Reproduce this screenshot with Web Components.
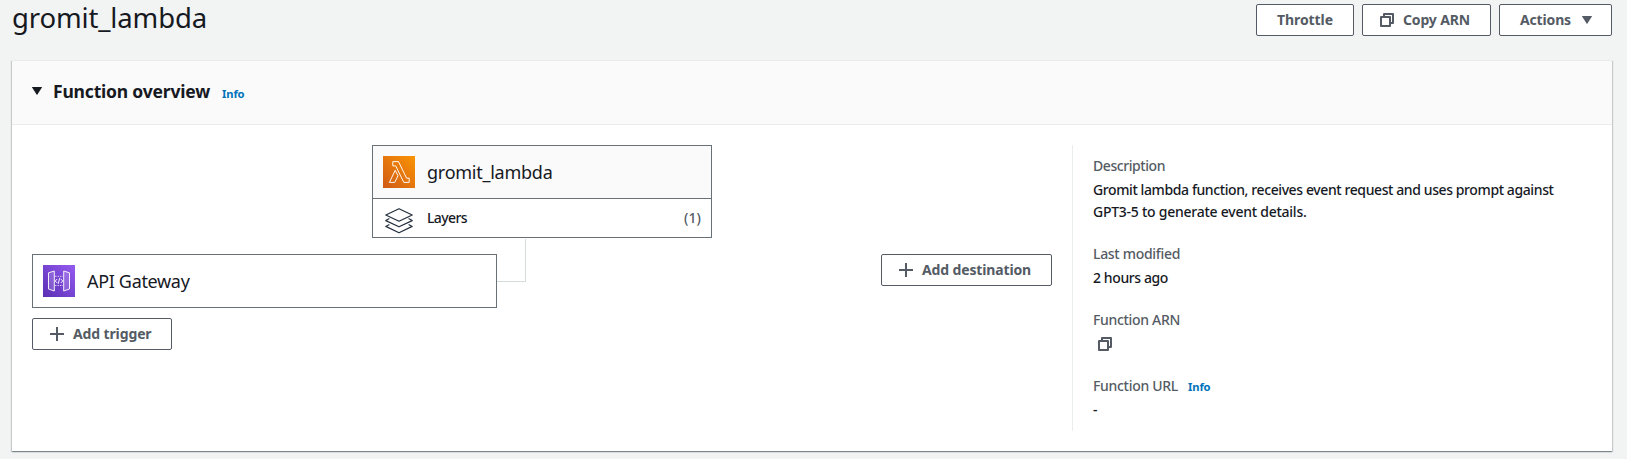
<!DOCTYPE html>
<html lang="en">
<head>
<meta charset="utf-8">
<title>gromit_lambda</title>
<style>
html,body{margin:0;height:100%;background:#f2f3f3;overflow:hidden}
body{font:500 14px/22px "Noto Sans","Open Sans",sans-serif;color:#16191f}
</style>
</head>
<body>
<lambda-page></lambda-page>
<script>
const define = (name, html, ready) => {
  const t = document.createElement('template');
  t.innerHTML = html;
  customElements.define(name, class extends HTMLElement {
    connectedCallback() {
      if (this.shadowRoot) return;
      this.attachShadow({mode: 'open'}).append(t.content.cloneNode(true));
      if (ready) ready(this);
    }
  });
};

// One line of text, tracked so that it spans the given measure.
define('ui-text', `<style>:host{display:block;white-space:nowrap;flex:none}span{display:inline-block}</style><span><slot></slot></span>`, el => {
  const w = +el.getAttribute('measure');
  if (!w) return;
  const span = el.shadowRoot.querySelector('span');
  const n = el.textContent.length;
  span.style.letterSpacing = ((w - span.getBoundingClientRect().width) / n) + 'px';
  el.style.width = w + 'px';
});

define('ui-icon', `<style>:host{display:block;flex:none}svg{display:block}</style><div></div>`, el => {
  const art = {
    copy: `<svg width="14" height="14" viewBox="0 0 14 14" fill="none" stroke="#545b64" stroke-width="2" stroke-linejoin="round"><path d="M1 4h9v9H1zM4 4V1h9v9h-3"/></svg>`,
    plus: `<svg width="14" height="14" viewBox="0 0 14 14" stroke="#545b64" stroke-width="2"><path d="M7 0v14M0 7h14"/></svg>`,
    caret: `<svg width="10" height="8" viewBox="0 0 10 8" fill="currentColor"><path d="M.4 0h9.2q.5 0 .3.5L5.4 7.6q-.4.6-.8 0L.1.5Q-.1 0 .4 0z"/></svg>`,
    layers: `<svg width="28" height="26" viewBox="0 0 28 26" fill="none" stroke="#232f3e" stroke-width="1.2" stroke-linejoin="round"><path d="M14 .8 27.2 7 14 13.2.8 7z"/><path d="M4.4 10.6.8 12.6 14 18.8l13.2-6.2-3.6-2M4.4 16.4.8 18.4 14 24.8l13.2-6.4-3.6-2"/></svg>`,
    lambda: `<svg width="32" height="32" viewBox="0 0 32 32"><defs><linearGradient id="g" x1="0" y1="1" x2="1" y2="0"><stop stop-color="#cf5a17"/><stop offset="1" stop-color="#fb9404"/></linearGradient></defs><path fill="url(#g)" d="M0 0h32v32H0z"/><path d="M12.2 14.3 6.4 26.4h5.3l3.3-6.6zM9.8 5.6v4.3h2.9l8.1 16.5h5.4v-4.2h-2.6L15.5 5.6z" fill="none" stroke="#fff" stroke-width=".95" stroke-linejoin="round"/></svg>`,
    gateway: `<svg width="32" height="32" viewBox="0 0 32 32"><defs><linearGradient id="g" x1="0" y1="1" x2="1" y2="0"><stop stop-color="#5a2fb4"/><stop offset="1" stop-color="#955bf0"/></linearGradient></defs><path fill="url(#g)" d="M0 0h32v32H0z"/><g fill="none" stroke="#fff" stroke-width=".9" stroke-linejoin="round"><path fill="#fff" fill-opacity=".16" d="M5.5 7.8 11.3 6v20l-5.8-2zM26.5 7.8 20.7 6v20l5.8-2z"/><path stroke-dasharray="1.5 1" stroke-opacity=".75" d="M12 11.3h8M12 20.5h8"/><path d="m14.2 14-2 2 2 2M17.8 14l2 2-2 2M16.8 12.8l-1.6 6.1"/></g></svg>`
  };
  el.shadowRoot.querySelector('div').innerHTML = art[el.getAttribute('name')];
});

define('ui-button', `<style>
:host{display:block;box-sizing:border-box;height:32px;flex:none}
button{all:unset;box-sizing:border-box;display:flex;align-items:center;width:100%;height:32px;padding:0 0 0 var(--pad,20px);border:1px solid #545b64;border-radius:2px;background:#fff;color:#545b64;font-weight:700;gap:9px}
</style><button><slot></slot></button>`);

define('info-link', `<style>:host{display:block;color:#0073bb;font-size:11.2px;font-weight:700}</style><ui-text measure="22.5">Info</ui-text>`);

define('page-header', `<style>
:host{display:flex;justify-content:space-between;height:60px;padding:0 15px 0 12px;box-sizing:border-box}
.title{font-size:27.5px;line-height:36px;font-weight:400}
.actions{display:flex;gap:8px;padding-top:4px}
</style>
<ui-text class="title" measure="195">gromit_lambda</ui-text>
<div class="actions">
<ui-button style="width:98px"><ui-text measure="56">Throttle</ui-text></ui-button>
<ui-button style="width:129px;--pad:17px"><ui-icon name="copy"></ui-icon><ui-text measure="67">Copy ARN</ui-text></ui-button>
<ui-button style="width:113px"><ui-text measure="51">Actions</ui-text><ui-icon name="caret" style="margin-left:2px"></ui-icon></ui-button>
</div>`);

define('resource-row', `<style>
:host{display:flex;align-items:center;height:52px;padding-left:10px;font-size:18px;font-weight:450;gap:12px}
</style><slot></slot>`);

define('function-diagram', `<style>
:host{display:block;width:1020px}
.fn{width:340px;box-sizing:border-box;margin-left:340px;border:1px solid #687078;height:93px}
.fn resource-row{background:#fafafa;border-bottom:1px solid #687078}
.layers{display:flex;align-items:center;height:38px;padding:0 10px 0 12px}
.layers ui-icon{margin:5px 14px 0 0}
.count{margin-left:auto;color:#545b64}
.low{display:flex;align-items:flex-start;margin-top:16px}
.triggers{width:465px;display:flex;flex-direction:column;gap:10px}
.api{border:1px solid #687078;background:#fff}
.link{width:28px;height:42px;margin-top:-15px;border:solid #d5dbdb;border-width:0 1px 1px 0}
</style>
<div class="fn"><resource-row><ui-icon name="lambda"></ui-icon><ui-text measure="125.5">gromit_lambda</ui-text></resource-row>
<div class="layers"><ui-icon name="layers"></ui-icon><ui-text measure="40">Layers</ui-text><ui-text class="count" measure="17">(1)</ui-text></div></div>
<div class="low">
<div class="triggers"><div class="api"><resource-row><ui-icon name="gateway"></ui-icon><ui-text measure="102.5">API Gateway</ui-text></resource-row></div>
<ui-button style="width:140px;--pad:17px"><ui-icon name="plus"></ui-icon><ui-text measure="78.5">Add trigger</ui-text></ui-button></div>
<div class="link"></div>
<ui-button style="width:171px;margin-left:auto;--pad:17px"><ui-icon name="plus"></ui-icon><ui-text measure="109">Add destination</ui-text></ui-button>
</div>`);

define('detail-item', `<style>
:host{display:block}
.label{display:flex;gap:10px;color:#545b64;margin-bottom:2px}
.value{min-height:22px}
</style><div class="label"><slot name="label"></slot></div><div class="value"><slot></slot></div>`);

define('function-details', `<style>
:host{display:flex;flex-direction:column;gap:20px;box-sizing:border-box;height:286px;border-left:1px solid #eaeded;padding:10px 0 0 20px;margin-left:20px;flex:1}
info-link{margin-top:1px;height:21px}
</style>
<detail-item><ui-text slot="label" measure="72">Description</ui-text><ui-text measure="460.5">Gromit lambda function, receives event request and uses prompt against</ui-text><ui-text measure="213.5">GPT3-5 to generate event details.</ui-text></detail-item>
<detail-item><ui-text slot="label" measure="87">Last modified</ui-text><ui-text measure="75">2 hours ago</ui-text></detail-item>
<detail-item><ui-text slot="label" measure="87">Function ARN</ui-text><ui-icon name="copy" style="padding:4px 0 4px 5px"></ui-icon></detail-item>
<detail-item><ui-text slot="label" measure="85">Function URL</ui-text><info-link slot="label"></info-link><ui-text measure="5.5">-</ui-text></detail-item>`);

define('overview-panel', `<style>
:host{display:block;box-sizing:border-box;margin:0 15px 0 12px;height:391px;background:#fff;border-top:1px solid #eaeded;box-shadow:0 1px 1px 0 rgba(0,28,36,.3),1px 1px 1px 0 rgba(0,28,36,.15),-1px 1px 1px 0 rgba(0,28,36,.15)}
header{display:flex;align-items:center;box-sizing:border-box;height:64px;padding:0 0 3px 20px;background:#fafafa;border-bottom:1px solid #eaeded}
.h{font-size:17.5px;font-weight:700;margin-left:11px}
info-link{margin:5px 0 0 12px}
.body{display:flex;padding:20px 20px 0}
</style>
<header><ui-icon name="caret"></ui-icon><ui-text class="h" measure="157">Function overview</ui-text><info-link></info-link></header>
<div class="body"><function-diagram></function-diagram><function-details></function-details></div>`);

define('lambda-page', `<style>:host{display:block}</style><page-header></page-header><overview-panel></overview-panel>`);
</script>
</body>
</html>
